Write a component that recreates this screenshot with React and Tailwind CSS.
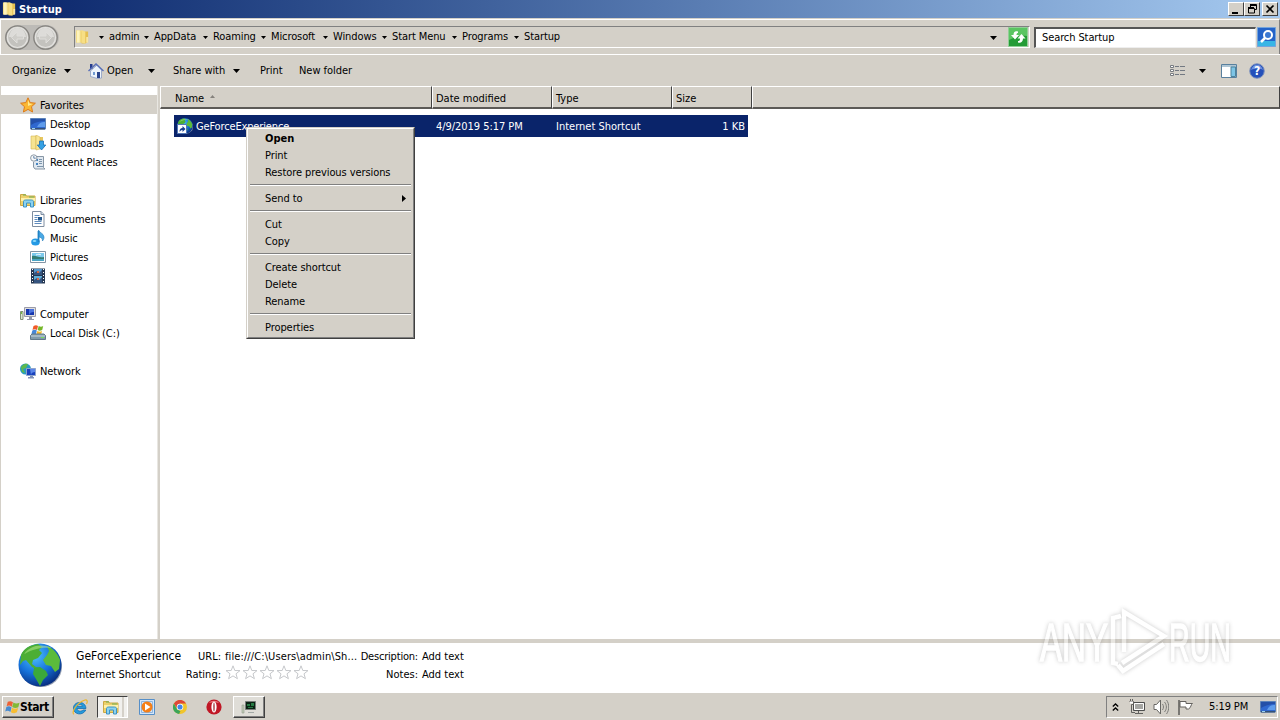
import clsx from "clsx";
import { twMerge } from "tailwind-merge";

const crumbs = [
  { label: "admin", width: "w-[45px]" },
  { label: "AppData", width: "w-[59px]" },
  { label: "Roaming", width: "w-[58px]" },
  { label: "Microsoft", width: "w-[62px]" },
  { label: "Windows", width: "w-[59px]" },
  { label: "Start Menu", width: "w-[70px]" },
  { label: "Programs", width: "w-[62px]" },
  { label: "Startup", width: "w-[50px]" },
];

const tree = [
  { label: "Favorites", icon: StarIcon, root: true, selected: true },
  { label: "Desktop", icon: DesktopIcon },
  { label: "Downloads", icon: DownloadsIcon },
  { label: "Recent Places", icon: RecentIcon },
  null,
  { label: "Libraries", icon: LibrariesIcon, root: true },
  { label: "Documents", icon: DocumentIcon },
  { label: "Music", icon: MusicIcon },
  { label: "Pictures", icon: PicturesIcon },
  { label: "Videos", icon: VideosIcon },
  null,
  { label: "Computer", icon: ComputerIcon, root: true },
  { label: "Local Disk (C:)", icon: DiskIcon },
  null,
  { label: "Network", icon: NetworkIcon, root: true },
];

const menu = [
  ["Open", "Print", "Restore previous versions"],
  ["Send to"],
  ["Cut", "Copy"],
  ["Create shortcut", "Delete", "Rename"],
  ["Properties"],
];

function Icon({ className, children, box = "0 0 16 16" }) {
  return (
    <svg className={twMerge("shrink-0 w-4 h-4", className)} viewBox={box} fill="none">
      {children}
    </svg>
  );
}

function Caret({ className = "w-[7px] h-1" }) {
  return (
    <Icon className={className} box="0 0 7 4">
      <path d="M0 0h7L3.5 4z" fill="#000" />
    </Icon>
  );
}

function FolderIcon({ className }) {
  return (
    <Icon className={className}>
      <path d="M1 1h8v13H1z" fill="#f3dc83" />
      <path d="M2 1h3v13H2z" fill="#fdf3bd" />
      <path d="M7 2h7v11l-3 2H7z" fill="#e5bf50" />
      <path d="M7 1l4 1v13l-4-1z" fill="#f7df85" />
      <path d="M12 8h2v6h-2z" fill="#f8e6a4" />
    </Icon>
  );
}

function StarIcon() {
  return (
    <Icon>
      <path d="M8 .8l2.2 4.8 5.2.6-3.9 3.5 1.1 5.3L8 12.4 3.4 15l1.1-5.3L.6 6.2l5.2-.6z" fill="#fbb733" stroke="#dc7b1c" />
      <path d="M8 3l1.4 3.5 3.3.5L8 9z" fill="#ffeb91" />
    </Icon>
  );
}

function DesktopIcon() {
  return (
    <Icon>
      <path d="M.5 2.5h15V13H.5z" fill="#2f68cf" stroke="#5c83b8" />
      <path d="M1 3h14v2c-5 0-9 1-14 4z" fill="#2450a8" />
      <path d="M7 11c2-4 4-5 8-5v5z" fill="#5f9ceb" />
      <path d="M1 12h14v1.5H1z" fill="#355176" />
      <path d="M2 12h3v1H2z" fill="#9ed3ee" />
    </Icon>
  );
}

function DownloadsIcon() {
  return (
    <Icon>
      <path d="M1 1h5v13H1z" fill="#f7e491" stroke="#d5b655" strokeWidth=".6" />
      <path d="M9 2h4v10H9z" fill="#e7c760" />
      <path d="M6 0l4 2v12l-4 1z" fill="#f9e595" stroke="#d5b655" strokeWidth=".6" />
      <path d="M9.500 6h4v4h2.300L11.500 15 7.300 10h2.200z" fill="#35a1e4" stroke="#1b6eb2" strokeWidth=".8" />
    </Icon>
  );
}

function RecentIcon() {
  return (
    <Icon>
      <path d="M4.500 2.500h9v11l1.500 1.500H5l-1.500-2V8" fill="#dfe7ef" stroke="#8796a5" />
      <path d="M6 5h2v2H6zm0 4h2v2H6z" fill="#4786c2" />
      <path d="M9 5.500h3M9 7.500h3M9 9.500h3M7 12.500h6" stroke="#7d95ac" />
      <circle cx="3.800" cy="4" r="3.200" fill="#f6f8fa" stroke="#8d99a5" />
      <path d="M3.800 2v2.200h2" stroke="#436b96" strokeWidth=".8" />
    </Icon>
  );
}

function LibrariesIcon() {
  return (
    <Icon>
      <path d="M.5 13.500v-11h5l1 1.500h8.500v9.500z" fill="#ecd16c" stroke="#cda945" />
      <path d="M1 6h14v3H1z" fill="#fff1a9" />
      <path d="M3 3h3M9 5h5" stroke="#6faf58" />
      <path d="M3.500 15V9.500c0-1 1-1.500 2-1.500h6c1 0 2 .5 2 1.500V15h-3v-4H6.500v4z" fill="#8bd2ef" stroke="#3e93c3" />
    </Icon>
  );
}

function DocumentIcon() {
  return (
    <Icon>
      <path d="M2.500.5H11l3 3v12H2.500z" fill="#fff" stroke="#7e8da0" />
      <path d="M11 .5v3h3" fill="#d2dfec" stroke="#7e8da0" />
      <path d="M4.500 4.500h5M4.500 6.500h3M4.500 8.500h3M4.500 10.500h7M4.500 12.500h7" stroke="#5f8bbd" />
      <path d="M8 6h4v3.500H8z" fill="#23588e" />
    </Icon>
  );
}

function MusicIcon() {
  return (
    <Icon>
      <path d="M8.500 0c1 3 5 3 5.500 7 .2 2-1 3-1.500 4 .2-3-2-4-4-4v6z" fill="#49a9e5" stroke="#247bb8" strokeWidth=".6" />
      <ellipse cx="5.500" cy="12" rx="4.300" ry="3.500" fill="#249ae5" />
      <path d="M8.500 1v11" stroke="#2183c5" strokeWidth="1.800" />
      <ellipse cx="4.500" cy="11" rx="1.800" ry="1" fill="#8cdafa" />
    </Icon>
  );
}

function PicturesIcon() {
  return (
    <Icon>
      <path d="M.5 2.500h15v11H.5z" fill="#fff" stroke="#8395a5" />
      <path d="M2 4h12v8H2z" fill="#7cc9ec" />
      <path d="M2 7c4-1 6 2 12 1v4H2z" fill="#347e75" />
      <path d="M2 10h12v2H2z" fill="#4ba5c4" />
      <path d="M6 6c2-1 4-1 5 0" stroke="#f2fbff" />
    </Icon>
  );
}

function VideosIcon() {
  return (
    <Icon>
      <path d="M1 .5h14v15H1z" fill="#253852" />
      <path d="M4 1h8v6H4z" fill="#5699ce" />
      <path d="M4 8h8v7H4z" fill="#60afd9" />
      <path d="M4 5l3-2 2 2 3-3v5H4zm0 7l3-2 2 2 3-3v6H4z" fill="#35547f" />
      <path d="M7 3h2v2H7zm0 7h2v2H7z" fill="#d06a49" />
      <path d="M2.500 1v14M13.500 1v14" stroke="#fff" strokeDasharray="1 2" />
    </Icon>
  );
}

function ComputerIcon() {
  return (
    <Icon>
      <path d="M.5 5.500H3v8H.5z" fill="#dce5d1" stroke="#829077" />
      <path d="M4.500 1.500h11v9h-11z" fill="#dedede" stroke="#9b9ba8" />
      <path d="M6 3h8v6H6z" fill="#1636ae" />
      <path d="M9 3h5v3c-3 0-4 1-5 3z" fill="#4b73dd" />
      <path d="M9 11h3v2h2v1H7v-1h2z" fill="#9297a9" />
      <path d="M1 6h1v2H1z" fill="#72bd3d" />
    </Icon>
  );
}

function WindowsFlag({ className }) {
  return (
    <Icon className={className} box="-1 1 17 14">
      <path d="M3 2.500c2-1 3.500-1 5.500.5L7.300 7.700c-2-1.500-3.500-1.500-5.500-.5z" fill="#ed6135" />
      <path d="M9 3.300c2 1.300 4 1.300 6.500.2l-1.300 4.700c-2 1.200-4 1.200-6.500-.2z" fill="#82b935" />
      <path d="M1.500 8c2-1 3.500-1 5.500.5l-1.200 4.700c-2-1.500-3.500-1.500-5.500-.5z" fill="#478bd1" />
      <path d="M7.600 8.800c2 1.300 4 1.300 6.400.2l-1.300 4.700c-2 1.200-4 1.200-6.400-.2z" fill="#f7bd31" />
    </Icon>
  );
}

function DiskIcon() {
  return (
    <Icon>
      <path d="M3.500 1c2-1 3-1 4.500 0L7 5c-2-1-3-1-4.500 0z" fill="#f15b28" />
      <path d="M8.700 1c1.500 1 3 1 4.500 0l-1 4c-2 1-3 1-4.500 0z" fill="#75b728" />
      <path d="M2.300 5.500c1.500-1 3-1 4.500 0l-1 4H1.300z" fill="#4688d8" />
      <path d="M7.300 6c2 1 3 1 4.700 0l-1 4H6.300z" fill="#f7b928" />
      <path d="M.5 10.500L2 9h12l1.500 1.500v4H.5z" fill="#819baa" stroke="#62798a" />
      <path d="M1 11h14" stroke="#c7d6df" />
      <path d="M11 12.500h3" stroke="#74dc5b" />
    </Icon>
  );
}

function Globe({ className }) {
  return (
    <Icon className={className} box="0 0 44 44">
      <defs>
        <radialGradient id="ocean" cx=".38" cy=".28" r=".75">
          <stop stopColor="#4fc3ff" />
          <stop offset=".55" stopColor="#1672da" />
          <stop offset="1" stopColor="#082c7d" />
        </radialGradient>
      </defs>
      <ellipse cx="23" cy="24" rx="21" ry="20" fill="#9aa4b5" />
      <circle cx="22" cy="22" r="21.500" fill="url(#ocean)" />
      <path d="M3 12c3-7 9-10 17-11l4 3-3 3 3 3-4 5-5 2-1 4 4 3 4 1-2 2-6-3-6-7-3 1-3 4z" fill="#4cae35" />
      <path d="M16 25l6-1 6 4 2 4-5 5-3 6-4-7-3-5z" fill="#3ba93a" />
      <path d="M29 3c6 2 11 8 13 14l-1 9-4 3-4-6-5-1-3-5 4-5 2-4z" fill="#5bbb3c" />
      <path d="M6 11C12 3 22 0 34 5c-9-1-17 0-28 6z" fill="#c1ef93" opacity=".5" />
    </Icon>
  );
}

function NetworkIcon() {
  return (
    <Icon>
      <circle cx="5.500" cy="6" r="5.500" fill="#289ac1" />
      <path d="M1 4c2-3 5-4 7-3L6 5 3 6l2 4-3-1z" fill="#5db94c" />
      <path d="M6.500 5.500h9v7h-9z" fill="#1841bd" stroke="#8fa4cc" />
      <path d="M10 6h5v3c-2 0-4 1-4 3z" fill="#5a86e9" />
      <path d="M10 13h3v1h1v1.500H8V14h2z" fill="#8293b7" />
    </Icon>
  );
}

function HomeIcon() {
  return (
    <Icon>
      <path d="M2 1h2.500v5H2z" fill="#263c8e" />
      <path d="M2.500 8L9 2l4.500 5v8l-4 .5-7-2z" fill="#edf4fc" stroke="#8093be" strokeWidth=".7" />
      <path d="M.5 8L8 1l7.500 7" stroke="#5a70b8" strokeWidth="1.500" />
      <path d="M9 9h3v6H9z" fill="#2a458d" />
      <path d="M5 9h2v3H5z" fill="#719bd1" />
    </Icon>
  );
}

function NavArrow({ flip }) {
  return (
    <Icon className={clsx("w-[25px] h-[25px]", flip && "-scale-x-100")} box="0 0 25 25">
      <circle cx="12.500" cy="12.500" r="11.700" fill="#cbcac6" stroke="#84827e" strokeWidth="1.300" />
      <circle cx="12.500" cy="12.500" r="10" fill="#c3c2be" stroke="#e4e3e0" strokeWidth="1.200" />
      <path d="M4 12C5 5 9 3 12.500 3S20 5 21 12z" fill="#dddcd9" />
      <path d="M6.500 12.500l5.500-5.500v4h6.500v3H12v4z" fill="#cfceca" stroke="#dfdedb" />
    </Icon>
  );
}

function TitleButton({ children, className }) {
  return (
    <span className={clsx("h-[14px] bg-[#d4d0c8] border border-t-white border-l-white border-b-[#404040] border-r-[#404040] flex items-center justify-center", className)}>
      <Icon className="w-[14px] h-3" box="0 0 14 12">{children}</Icon>
    </span>
  );
}

function TitleBar() {
  return (
    <header className="h-[18px] shrink-0 flex items-center bg-linear-to-r from-[#0a246a] to-[#a6caf0] text-white pl-[2px] pr-[2px]">
      <FolderIcon className="w-[15px]" />
      <span className="ml-[2px] pt-px font-bold tracking-[0.1px]">Startup</span>
      <TitleButton className="w-4 ml-auto">
        <path d="M3 9h6v2H3z" fill="#000" />
      </TitleButton>
      <TitleButton className="w-4">
        <path d="M5 1.500h6.500v5H9.500M5 2.500h6M5.500 1v3M3 5.500h6.500v4.500h-6V5M3 4.500h6" stroke="#000" />
      </TitleButton>
      <TitleButton className="w-4 ml-[2px]">
        <path d="M3.500 2.500l7 7m0-7l-7 7" stroke="#000" strokeWidth="1.700" />
      </TitleButton>
    </header>
  );
}

function AddressBar() {
  return (
    <div className="h-9 shrink-0 mt-px border border-t-white border-l-white border-r-[#808080] border-b-[#808080] flex items-center pl-1">
      <div className="w-[54px] flex gap-[3px] rounded-full bg-[#bdbbb7]">
        <NavArrow />
        <NavArrow flip />
      </div>
      <div className="ml-[15px] w-[956px] shrink-0 h-[22px] border border-t-[#808080] border-l-[#808080] border-b-white border-r-white flex items-center">
        <FolderIcon className="w-[15px]" />
        <nav className="flex ml-[9px]">
          {crumbs.map((c) => (
            <span key={c.label} className={clsx("flex items-center", c.width)}>
              <Caret className="w-[5px] h-[3px]" />
              <span className="ml-[5px] whitespace-nowrap tracking-[-0.1px]">{c.label}</span>
            </span>
          ))}
        </nav>
        <span className="ml-auto mr-[32px] mt-px">
          <Caret />
        </span>
      </div>
      <Icon className="-ml-[22px] w-5 h-5" box="0 0 20 20">
        <path d="M.5.500h19v19H.5z" fill="#249c36" stroke="#91cf96" />
        <path d="M1 1h18v8C12 8 7 10 1 13z" fill="#5bc562" />
        <path d="M10 4.500C7 3.500 5.500 5 5.500 8H3l4 4.500L11 8H8.500c0-1.500.5-2 1.500-2zM10 15.500c3 1 5-1 5-4h2.500l-4-4.500-4 4.500H12c0 2-.5 2.500-2 2.500z" fill="#fff" />
      </Icon>
      <div className="ml-[6px] w-[222px] shrink-0 h-[21px] bg-white border-t-2 border-l-2 border-t-[#555] border-l-[#555] border-r border-b border-r-[#eee] border-b-[#eee] pl-[6px] flex items-center tracking-[-0.1px]">
        Search Startup
      </div>
      <Icon className="ml-px w-[19px] h-5" box="0 0 19 20">
        <path d="M.5.500h18v19H.5z" fill="#2463c8" stroke="#74a4db" />
        <path d="M1 14h17v5H1z" fill="#38b5e5" />
        <circle cx="11" cy="8" r="4" stroke="#fff" strokeWidth="2" fill="#3b78d2" />
        <path d="M8 11l-4 4" stroke="#fff" strokeWidth="2.500" />
      </Icon>
    </div>
  );
}

function Toolbar() {
  return (
    <div className="h-8 shrink-0 border-t border-white flex items-center pl-3 pr-[15px] whitespace-nowrap tracking-[-0.05px]">
      <span className="w-[52px]">Organize</span>
      <Caret />
      <span className="ml-[17px]"><HomeIcon /></span>
      <span className="ml-[3px] w-[41px]">Open</span>
      <Caret />
      <span className="ml-[18px] w-[60px]">Share with</span>
      <Caret />
      <span className="ml-5 w-[39px]">Print</span>
      <span>New folder</span>
      <Icon className="ml-auto">
        <path d="M.5 2.500h3v2h-3zm0 4h3v2h-3zm0 4h3v2h-3z" fill="#fff" stroke="#777b80" />
        <path d="M5 3.500h4m1 0h5M5 7.500h4m1 0h5M5 11.500h4m1 0h5" stroke="#737982" />
      </Icon>
      <span className="ml-[13px]"><Caret /></span>
      <Icon className="ml-[15px]">
        <path d="M.5 1.500h15v13H.5z" fill="#fff" stroke="#58809e" />
        <path d="M1 3h14" stroke="#5f8ca9" />
        <path d="M10 4h4.500v9.500H10z" fill="#7dc4e5" stroke="#4c829c" />
      </Icon>
      <Icon className="ml-3">
        <circle cx="8" cy="8" r="7.300" fill="#2450ba" stroke="#8295bd" />
        <path d="M2 7c2-7 10-7 12 0-3-2-8-2-12 0z" fill="#6d91df" />
        <text x="8" y="12.300" textAnchor="middle" fill="#fff" className="text-[12px] font-bold">?</text>
      </Icon>
    </div>
  );
}

function Sidebar() {
  return (
    <aside className="w-[157px] shrink-0 ml-px mr-[2px] bg-white border-r border-[#e9e7e2] pt-[9px]">
      {tree.map((row, i) =>
        row ? (
          <div
            key={row.label}
            className={clsx(
              "h-[19px] flex items-center gap-1 whitespace-nowrap tracking-[-0.1px]",
              row.root ? "pl-[19px]" : "pl-[29px]",
              row.selected && "bg-[#d4d0c8]"
            )}
          >
            <row.icon />
            <span className="pt-[2px]">{row.label}</span>
          </div>
        ) : (
          <div key={i} className="h-[19px]" />
        )
      )}
    </aside>
  );
}

function HeaderCell({ children, className }) {
  return (
    <div className={clsx("pt-[3px] border-t border-l border-t-white border-l-white border-r border-b-2 border-r-[#404040] border-b-[#5c5a57] bg-[#d4d0c8] flex items-center", className)}>
      {children}
    </div>
  );
}

function ContextMenu() {
  return (
    <div className="absolute left-[246px] top-[127px] w-[169px] h-[212px] bg-[#d4d0c8] border border-t-[#d4d0c8] border-l-[#d4d0c8] border-r-[#404040] border-b-[#404040]">
      <div className="h-full border border-t-white border-l-white border-r-[#808080] border-b-[#808080] p-px">
        {menu.map((group, i) => (
          <div key={i}>
            {i > 0 && (
              <div className="h-[9px] py-[3px] px-px">
                <div className="h-[2px] border-t border-t-[#808080] border-b border-b-white" />
              </div>
            )}
            {group.map((item) => (
              <div key={item} className={clsx("h-[17px] pl-4 pr-[6px] flex items-center justify-between whitespace-nowrap", item === "Open" ? "font-bold" : "tracking-[-0.08px]")}>
                {item}
                {item === "Send to" && (
                  <Icon className="w-1 h-[7px]" box="0 0 4 7">
                    <path d="M0 0v7l4-3.500z" fill="#000" />
                  </Icon>
                )}
              </div>
            ))}
          </div>
        ))}
      </div>
    </div>
  );
}

function FileList() {
  return (
    <main className="flex-1 bg-white">
      <div className="h-[23px] flex">
        <HeaderCell className="w-[272px] pl-[14px]">
          Name
          <Icon className="w-[5px] h-[3px] ml-[6px] -mt-1" box="0 0 5 3">
            <path d="M0 3h5L2.500 0z" fill="#85827d" />
          </Icon>
        </HeaderCell>
        <HeaderCell className="w-[120px] pl-[3px]">Date modified</HeaderCell>
        <HeaderCell className="w-[120px] pl-[3px]">Type</HeaderCell>
        <HeaderCell className="w-20 pl-[3px]">Size</HeaderCell>
        <HeaderCell className="flex-1" />
      </div>
      <div className="mt-[6px] ml-[14px] w-[574px] h-[22px] bg-[#0a246a] text-white flex items-center whitespace-nowrap">
        <div className="w-[262px] pl-[3px] flex items-center gap-[3px]">
          <span className="relative">
            <Globe />
            <Icon className="absolute left-0 bottom-0 w-[10px] h-[10px]" box="0 0 10 10">
              <path d="M.5.500h9v9h-9z" fill="#fff" stroke="#5076b5" />
              <path d="M2.500 8c0-3 1-4 3-4V2l3 3-3 3V6c-2 0-2 1-3 2z" fill="#183d90" />
            </Icon>
          </span>
          <span className="tracking-[-0.15px] pt-[2px]">GeForceExperience</span>
        </div>
        <span className="w-[120px] pt-[2px] tracking-[-0.05px]">4/9/2019 5:17 PM</span>
        <span className="pt-[2px]">Internet Shortcut</span>
        <span className="ml-auto pr-[3px] pt-[2px]">1 KB</span>
      </div>
    </main>
  );
}

function RatingStars() {
  return (
    <span className="flex gap-px -mt-px">
      {[1, 2, 3, 4, 5].map((n) => (
        <Icon key={n}>
          <path d="M8 .8l1.800 4.700 5.200.1-4 3.200 1.400 4.900L8 10.900l-4.400 2.800L5 8.800 1 5.600l5.200-.1z" fill="#fff" stroke="#c6c8cb" />
        </Icon>
      ))}
    </span>
  );
}

function DetailsPane() {
  return (
    <section className="h-[49px] shrink-0 bg-white flex pl-[18px] whitespace-nowrap leading-[18px]">
      <Globe className="w-11 h-11" />
      <div className="ml-[14px] pt-[4px] w-[106px]">
        <div className="text-[12px] tracking-[0.05px]">GeForceExperience</div>
        <div className="pt-px">Internet Shortcut</div>
      </div>
      <div className="pt-[5px] w-[39px] text-right">
        <div>URL:</div>
        <div>Rating:</div>
      </div>
      <div className="pt-[5px] ml-1 w-[134px]">
        <div className="tracking-[0.1px]">file:///C:\Users\admin\Sh...</div>
        <RatingStars />
      </div>
      <div className="pt-[5px] w-[59px] flex flex-col items-end">
        <div className="tracking-[-0.2px]">Description:</div>
        <div>Notes:</div>
      </div>
      <div className="pt-[5px] ml-1">
        <div>Add text</div>
        <div>Add text</div>
      </div>
    </section>
  );
}

function Taskbar() {
  return (
    <footer className="h-7 shrink-0 flex items-center border-t border-t-white">
      <button className="ml-[2px] w-[52px] h-[22px] shrink-0 bg-[#d4d0c8] border border-t-white border-l-white border-b-[#404040] border-r-[#404040] shadow-[inset_-1px_-1px_0_#808080] flex items-center pl-px">
        <WindowsFlag />
        <b className="text-[12px] tracking-[-0.4px]">Start</b>
      </button>
      <Icon className="ml-[18px]">
        <path d="M14 9.500H5c.3 3 4.500 3.500 6 1.500h2.800C11 17 1.500 16 1.500 9S13.500 1 14 9.500zM5.200 7.300h5.300c-.5-2.500-4.800-2.500-5.300 0z" fill="#249bdc" stroke="#176eb3" strokeWidth=".8" />
        <path d="M2 15.300C-1 14 4 4 13 1c2-.5 3 1 1.500 4" stroke="#edb72f" strokeWidth="1.200" />
      </Icon>
      <div className="ml-[9px] w-[31px] h-[22px] bg-[#f1f0ed] border border-t-[#404040] border-l-[#404040] border-b-white border-r-white flex items-center pl-[5px]">
        <LibrariesIcon />
        <span className="ml-[3px] self-stretch border-l-2 border-[#d4d0c8]" />
      </div>
      <Icon className="ml-[11px]">
        <path d="M.5.500h15v15H.5z" fill="#d3e6fa" stroke="#568fc8" />
        <path d="M2.500 2.500h11v11h-11z" stroke="#8eb4dc" />
        <circle cx="8" cy="8" r="5.500" fill="#f57f17" />
        <path d="M6 4.500v7l5.500-3.500z" fill="#fff" />
      </Icon>
      <Icon className="ml-[18px] w-[14px] h-[14px]">
        <circle cx="8" cy="8" r="8" fill="#f1c52b" />
        <path d="M1 4a8 8 0 0114 0H8L4.500 9z" fill="#de4738" />
        <path d="M1 4l4 7 3.500 1.500L7 16A8 8 0 011 4z" fill="#3ba55a" />
        <circle cx="8" cy="8" r="3.700" fill="#fff" />
        <circle cx="8" cy="8" r="2.900" fill="#4286e8" />
      </Icon>
      <Icon className="ml-[19px]">
        <circle cx="8" cy="8" r="7.600" fill="#c01725" />
        <path d="M3 4c2-3 8-3 10 0l-5-1z" fill="#e8777b" />
        <ellipse cx="8" cy="8" rx="2.600" ry="5.500" fill="#fff" />
        <ellipse cx="8" cy="8" rx=".8" ry="4.500" fill="#b04a50" />
      </Icon>
      <div className="ml-[11px] w-8 h-[22px] bg-[#dfddd7] border border-t-white border-l-white border-b-[#404040] border-r-[#404040] shadow-[inset_-1px_-1px_0_#808080] flex items-center justify-center">
        <Icon>
          <path d="M1 6h2v8H1z" fill="#c1cbb7" stroke="#929b8b" strokeWidth=".6" />
          <path d="M4.500 2.500h10v8h-10z" fill="#0a2213" stroke="#777d79" />
          <path d="M6 5h3v2H6zm4-1h3v3h-3zM7 8h5v1H7z" fill="#257a43" />
          <path d="M7 13h6v1H7z" fill="#a4aaa7" />
        </Icon>
      </div>
      <div className="ml-auto mr-[2px] w-[172px] h-[22px] border border-t-[#808080] border-l-[#808080] border-b-white border-r-white flex items-center">
        <Icon className="ml-[5px] w-[7px] h-2" box="0 0 7 8">
          <path d="M.8 3.500l2.700-2.500 2.700 2.500M.8 7.500L3.500 5l2.700 2.500" stroke="#000" strokeWidth="1.300" />
        </Icon>
        <Icon className="ml-[10px]">
          <path d="M4.500 3.500h11v8h-11z" fill="#a6a6a3" stroke="#4e4e4e" />
          <path d="M5.500 4.500h9v6h-9z" stroke="#fff" />
          <path d="M.5 2.500h4v3H2.500v8H6M1.500 0v3M3.500 0v3M9.500 12v2M6 14.500h8" stroke="#62615e" />
          <path d="M1 2.500h3v2H1z" fill="#fff" />
        </Icon>
        <Icon className="ml-2">
          <path d="M1 5.500h2.500L7.500 1v14l-4-4.500H1z" fill="#fff" stroke="#686764" />
          <path d="M9.500 5c1.300 2 1.300 4 0 6m2-8c2.500 3 2.500 7 0 10m2-12c3 4 3 10 0 14" stroke="#7d7c79" />
        </Icon>
        <Icon className="ml-2">
          <path d="M2 1v15" stroke="#5c5b59" strokeWidth="1.500" />
          <path d="M3 2.500h6v2h6.500c-2 1-1 4-4 5.500H9V8H3z" fill="#fff" stroke="#64625f" />
        </Icon>
        <span className="ml-4 pt-px w-[51px] shrink-0 tracking-[-0.1px] whitespace-nowrap">5:19 PM</span>
        <DesktopIcon />
      </div>
    </footer>
  );
}

function Watermark() {
  return (
    <svg className="absolute left-[1030px] top-[600px] w-[210px] h-20 drop-shadow-[0_0_2px_#888] opacity-45" viewBox="0 0 210 80">
      <g fill="#fff" stroke="#fff" strokeWidth="1.500" className="font-['Liberation_Sans_Narrow','Liberation_Sans',sans-serif] text-[54px] leading-[60px]">
        <text x="10" y="61" textLength="68" lengthAdjust="spacingAndGlyphs">ANY</text>
        <text x="139" y="61" textLength="62" lengthAdjust="spacingAndGlyphs">RUN</text>
      </g>
      <path d="M91 16l-8 2v45l5 1M94 52V12l40 24-42 27M88 65l5 6 41-27" fill="none" stroke="#fff" strokeWidth="4.500" />
    </svg>
  );
}

export default function App() {
  return (
    <div className="relative w-[1280px] h-[720px] overflow-hidden flex flex-col bg-[#d4d0c8] text-black text-[11px] leading-[14px] font-['DejaVu_Sans_Condensed','DejaVu_Sans',sans-serif] font-stretch-condensed">
      <TitleBar />
      <AddressBar />
      <div className="-mt-px flex flex-col shrink-0">
        <Toolbar />
      </div>
      <div className="h-[553px] shrink-0 flex">
        <Sidebar />
        <FileList />
      </div>
      <div className="h-1 shrink-0" />
      <DetailsPane />
      <Taskbar />
      <ContextMenu />
      <Watermark />
    </div>
  );
}
